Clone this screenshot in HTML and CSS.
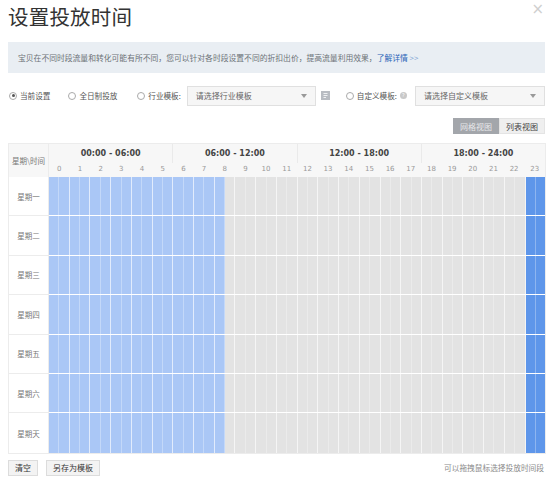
FILE: index.html
```html
<!DOCTYPE html>
<html lang="zh-CN">
<head>
<meta charset="utf-8">
<link rel="stylesheet" href="styles.css">
</head>
<body>
<div class="page">
  <div class="title-bar">
    <h1 class="title">设置投放时间</h1>
    <span class="close">×</span>
  </div>
  <div class="notice">宝贝在不同时段流量和转化可能有所不同，您可以针对各时段设置不同的折扣出价，提高流量利用效果，<a class="more">了解详情</a><span class="arrows"> &gt;&gt;</span></div>

  <div class="options">
    <label class="opt opt-1"><span class="radio checked"></span>当前设置</label>
    <label class="opt opt-2"><span class="radio"></span>全日制投放</label>
    <label class="opt opt-3"><span class="radio"></span>行业模板:</label>
    <div class="select sel-1"><span>请选择行业模板</span><span class="caret"></span></div>
    <span class="tpl-icon"><svg width="9" height="9" viewBox="0 0 9 9"><rect x="0" y="0" width="9" height="9" fill="#b8bcc2"/><path d="M2.5 2.5h4M2.5 4.5h4M2.5 6.5h2.5" stroke="#eef0f2" stroke-width="1"/></svg></span>
    <label class="opt opt-4"><span class="radio"></span>自定义模板:</label>
    <span class="help">?</span>
    <div class="select sel-2"><span>请选择自定义模板</span><span class="caret"></span></div>
  </div>

  <div class="views">
    <span class="view active">网格视图</span><span class="view">列表视图</span>
  </div>

  <div class="table">
    <div class="head">
      <div class="corner">星期\时间</div>
      <div class="head-right">
        <div class="ranges">
          <div class="range">00:00 - 06:00</div>
          <div class="range">06:00 - 12:00</div>
          <div class="range">12:00 - 18:00</div>
          <div class="range">18:00 - 24:00</div>
        </div>
        <div class="hours">
          <span>0</span><span>1</span><span>2</span><span>3</span><span>4</span><span>5</span><span>6</span><span>7</span><span>8</span><span>9</span><span>10</span><span>11</span><span>12</span><span>13</span><span>14</span><span>15</span><span>16</span><span>17</span><span>18</span><span>19</span><span>20</span><span>21</span><span>22</span><span>23</span>
        </div>
      </div>
    </div>
    <div class="row"><div class="day">星期一</div><div class="cells"><i></i><i></i><i></i><i></i><i></i><i></i><i></i><i></i><i></i><i></i><i></i><i></i><i></i><i></i><i></i><i></i><i></i><i></i><i></i><i></i><i></i><i></i><i></i><i></i><i></i><i></i><i></i><i></i><i></i><i></i><i></i><i></i><i></i><i></i><i></i><i></i><i></i><i></i><i></i><i></i><i></i><i></i><i></i><i></i><i></i><i></i><i></i><i></i></div></div>
    <div class="row"><div class="day">星期二</div><div class="cells"><i></i><i></i><i></i><i></i><i></i><i></i><i></i><i></i><i></i><i></i><i></i><i></i><i></i><i></i><i></i><i></i><i></i><i></i><i></i><i></i><i></i><i></i><i></i><i></i><i></i><i></i><i></i><i></i><i></i><i></i><i></i><i></i><i></i><i></i><i></i><i></i><i></i><i></i><i></i><i></i><i></i><i></i><i></i><i></i><i></i><i></i><i></i><i></i></div></div>
    <div class="row"><div class="day">星期三</div><div class="cells"><i></i><i></i><i></i><i></i><i></i><i></i><i></i><i></i><i></i><i></i><i></i><i></i><i></i><i></i><i></i><i></i><i></i><i></i><i></i><i></i><i></i><i></i><i></i><i></i><i></i><i></i><i></i><i></i><i></i><i></i><i></i><i></i><i></i><i></i><i></i><i></i><i></i><i></i><i></i><i></i><i></i><i></i><i></i><i></i><i></i><i></i><i></i><i></i></div></div>
    <div class="row"><div class="day">星期四</div><div class="cells"><i></i><i></i><i></i><i></i><i></i><i></i><i></i><i></i><i></i><i></i><i></i><i></i><i></i><i></i><i></i><i></i><i></i><i></i><i></i><i></i><i></i><i></i><i></i><i></i><i></i><i></i><i></i><i></i><i></i><i></i><i></i><i></i><i></i><i></i><i></i><i></i><i></i><i></i><i></i><i></i><i></i><i></i><i></i><i></i><i></i><i></i><i></i><i></i></div></div>
    <div class="row"><div class="day">星期五</div><div class="cells"><i></i><i></i><i></i><i></i><i></i><i></i><i></i><i></i><i></i><i></i><i></i><i></i><i></i><i></i><i></i><i></i><i></i><i></i><i></i><i></i><i></i><i></i><i></i><i></i><i></i><i></i><i></i><i></i><i></i><i></i><i></i><i></i><i></i><i></i><i></i><i></i><i></i><i></i><i></i><i></i><i></i><i></i><i></i><i></i><i></i><i></i><i></i><i></i></div></div>
    <div class="row"><div class="day">星期六</div><div class="cells"><i></i><i></i><i></i><i></i><i></i><i></i><i></i><i></i><i></i><i></i><i></i><i></i><i></i><i></i><i></i><i></i><i></i><i></i><i></i><i></i><i></i><i></i><i></i><i></i><i></i><i></i><i></i><i></i><i></i><i></i><i></i><i></i><i></i><i></i><i></i><i></i><i></i><i></i><i></i><i></i><i></i><i></i><i></i><i></i><i></i><i></i><i></i><i></i></div></div>
    <div class="row"><div class="day">星期天</div><div class="cells"><i></i><i></i><i></i><i></i><i></i><i></i><i></i><i></i><i></i><i></i><i></i><i></i><i></i><i></i><i></i><i></i><i></i><i></i><i></i><i></i><i></i><i></i><i></i><i></i><i></i><i></i><i></i><i></i><i></i><i></i><i></i><i></i><i></i><i></i><i></i><i></i><i></i><i></i><i></i><i></i><i></i><i></i><i></i><i></i><i></i><i></i><i></i><i></i></div></div>
  </div>

  <div class="footer">
    <div class="actions">
      <span class="btn">清空</span>
      <span class="btn">另存为模板</span>
    </div>
    <span class="hint">可以拖拽鼠标选择投放时间段</span>
  </div>
</div>
</body>
</html>
```

FILE: styles.css
```css
* { box-sizing: border-box; }
html, body { margin: 0; padding: 0; background: #fff; }
body {
  font-family: "Noto Sans CJK SC", "Noto Sans", sans-serif;
  color: #333;
  width: 550px;
  height: 483px;
  overflow: hidden;
}
.page { padding: 0 4px 0 8px; }

.title-bar {
  display: flex;
  justify-content: space-between;
  align-items: flex-start;
  height: 42px;
}
.title {
  margin: 2px 0 0 0;
  font-size: 20.5px;
  font-weight: normal;
  line-height: 28px;
  color: #333;
  letter-spacing: 0.2px;
}
.close {
  font-size: 15px;
  line-height: 15px;
  margin-top: 2px;
  color: #cfcfcf;
  margin-right: 2px;
  font-family: "DejaVu Sans", sans-serif;
}

.notice {
  height: 31px;
  margin-right: 1px;
  background: #e9eef3;
  padding: 0 10px;
  font-size: 7.8px;
  line-height: 31px;
  color: #6d7378;
  white-space: nowrap;
}
.notice .more { color: #2a64b8; }
.notice .arrows { color: #7fa6d6; }

.options {
  display: flex;
  align-items: center;
  height: 21px;
  margin-top: 12px;
  margin-right: 1px;
  font-size: 7.6px;
  color: #555;
}
.opt { display: flex; align-items: center; white-space: nowrap; flex: none; }
.radio {
  width: 8px;
  height: 8px;
  border: 1px solid #aaa;
  border-radius: 50%;
  margin-right: 3px;
  background: #fff;
  position: relative;
  flex: none;
}
.radio.checked::after {
  content: "";
  position: absolute;
  left: 1.5px; top: 1.5px;
  width: 3px; height: 3px;
  border-radius: 50%;
  background: #555;
}
.opt-1 { margin-left: 1px; }
.opt-2 { margin-left: 18px; }
.opt-3 { margin-left: 20px; }
.select {
  display: flex;
  align-items: center;
  justify-content: space-between;
  height: 20px;
  border: 1px solid #e0e0e0;
  background: #f6f6f6;
  padding: 0 8px 0 8px;
  color: #666;
  font-size: 8px;
  white-space: nowrap;
}
.sel-1 { width: 129px; flex: none; margin-left: 6px; }
.sel-2 { flex: 1; margin-left: 8px; }
.caret {
  width: 0; height: 0;
  border-left: 3.5px solid transparent;
  border-right: 3.5px solid transparent;
  border-top: 4px solid #999;
}
.tpl-icon { display: flex; margin-left: 5px; flex: none; }
.opt-4 { margin-left: 16px; }
.help {
  width: 7px; height: 7px;
  flex: none;
  border-radius: 50%;
  background: #c9c9c9;
  color: #fff;
  font-size: 5px;
  line-height: 7px;
  text-align: center;
  margin-left: 3px;
  font-family: "DejaVu Sans", sans-serif;
}

.views {
  display: flex;
  justify-content: flex-end;
  margin-top: 12px;
  margin-right: 1px;
}
.view {
  height: 16px;
  line-height: 15px;
  padding: 0 6px;
  font-size: 8px;
  background: #efefef;
  color: #444;
  border: 1px solid #e4e4e4;
}
.view.active {
  background: #a3a6ab;
  color: #e8e8ea;
  border-color: #a3a6ab;
}

.table {
  margin-top: 9px;
  border: 1px solid #ececec;
  width: 538px;
}
.head { display: flex; background: #f7f7f7; }
.corner {
  width: 40px;
  flex: none;
  font-size: 7.5px;
  color: #777;
  display: flex;
  align-items: center;
  justify-content: center;
  height: 33px;
  border-right: 1px solid #ececec;
  white-space: nowrap;
}
.head-right { flex: 1; display: flex; flex-direction: column; }
.ranges { display: flex; height: 19px; }
.range {
  flex: 1;
  text-align: center;
  font-family: "DejaVu Sans", sans-serif;
  font-weight: bold;
  font-size: 8px;
  line-height: 20px;
  color: #444;
  border-left: 1px solid #eaeaea;
}
.range:first-child { border-left: none; }
.hours { display: flex; height: 14px; }
.hours span {
  flex: 1;
  text-align: center;
  font-family: "DejaVu Sans", sans-serif;
  font-size: 7px;
  line-height: 13px;
  color: #999;
}
.row {
  display: flex;
  height: 39.4px;
}
.day {
  width: 40px;
  flex: none;
  display: flex;
  align-items: center;
  justify-content: center;
  font-size: 7.5px;
  color: #777;
  border-right: 1px solid #ececec;
  border-bottom: 1px solid #ececec;
  background: #fff;
}
.row:last-child .day { border-bottom: none; }
.cells {
  flex: 1;
  display: flex;
  border-bottom: 1px solid #fff;
}
.row:last-child .cells { border-bottom: none; }
.cells i {
  flex: 1;
  background: #e3e3e3;
  border-right: 1px solid rgba(255,255,255,0.3);
}
.cells i:nth-child(even) { border-right-color: rgba(255,255,255,0.65); }
.cells i:nth-child(-n+17) { background: #aac7f6; }
.cells i:nth-child(n+47) { background: #5e96ea; }
.cells i:last-child { border-right: none; }

.footer {
  display: flex;
  justify-content: space-between;
  align-items: center;
  margin-top: 6px;
  margin-right: 2px;
}
.actions { display: flex; gap: 8px; }
.btn {
  height: 16px;
  line-height: 14px;
  padding: 0 6px;
  font-size: 8px;
  color: #333;
  background: #f3f3f3;
  border: 1px solid #dcdcdc;
}
.hint { font-size: 7.7px; color: #8a8a8a; }
```
